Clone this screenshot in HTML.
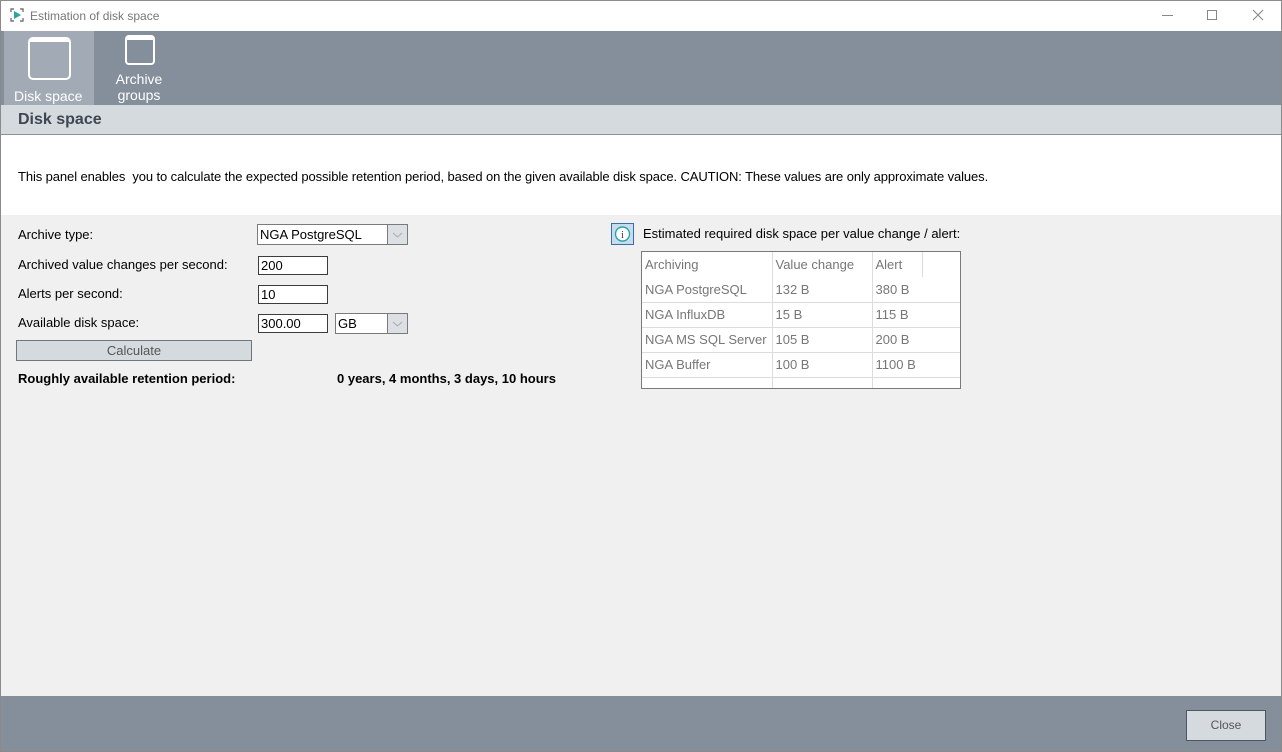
<!DOCTYPE html>
<html><head><meta charset="utf-8"><style>
*{box-sizing:border-box;margin:0;padding:0}
body{width:1282px;height:752px;overflow:hidden;font-family:"Liberation Sans",Arial,sans-serif;font-size:12px;color:#000;background:#f0f0f0;position:relative}
.abs{position:absolute}
.frame{left:0;top:0;width:1282px;height:752px;border:1px solid #8a8a8a;z-index:10}
.title{left:0;top:0;width:1282px;height:31px;background:#fff}
.tb{left:0;top:31px;width:1282px;height:74px;background:#848f9b}
.hdr{left:0;top:105px;width:1282px;height:30px;background:#d5dadf;border-bottom:1px solid #8a9097}
.white{left:0;top:135px;width:1282px;height:80px;background:#fff}
.foot{left:0;top:696px;width:1282px;height:56px;background:#848f9b}
.lbl{font-size:13px}
.inp{background:#fff;border:1px solid #3c3c3c;height:19px;font-size:13px;padding:1px 0 0 2px;line-height:16px}
.sel{border:1px solid #7a7a7a;height:21px;font-size:13px;padding:2px 0 0 2px;background:#fff}
.sel .ar{position:absolute;right:0;top:0;width:20px;height:19px;background:#dcdfe3;border-left:1px solid #7a7a7a}
table{border-collapse:collapse;font-size:13px;color:#777;table-layout:fixed}
td{height:25px;padding:0 3px;border-bottom:1px solid #dcdcdc;border-right:1px solid #dcdcdc;white-space:nowrap;overflow:hidden}
</style></head><body>
<div class="abs title">
<svg class="abs" style="left:10px;top:8px" width="14" height="14" viewBox="0 0 14 14"><path d="M1 4V1h3M10 1h3v3M13 10v3h-3M4 13H1v-3" stroke="#777" stroke-width="1.4" fill="none"/><path d="M4 3l7 4-7 4z" fill="#2aa5a0"/></svg>
<div class="abs" style="left:30px;top:9px;color:#777;font-size:12px">Estimation of disk space</div>
<div class="abs" style="left:1162px;top:15px;width:11px;height:1px;background:#888"></div>
<div class="abs" style="left:1207px;top:10px;width:10px;height:10px;border:1px solid #888"></div>
<svg class="abs" style="left:1252px;top:9px" width="12" height="12"><path d="M1 1l10 10M11 1L1 11" stroke="#888" stroke-width="1.1"/></svg>
</div>
<div class="abs tb">
<div class="abs" style="left:4px;top:0;width:90px;height:74px;background:#a2abb5"></div>
<div class="abs" style="left:28px;top:6px;width:43px;height:43px;border:2px solid #fff;border-radius:5px;border-top-width:5px"></div>
<div class="abs" style="left:14px;top:57px;color:#fff;font-size:14px">Disk space</div>
<div class="abs" style="left:125px;top:4px;width:30px;height:30px;border:2px solid #fff;border-radius:4px;border-top-width:5px"></div>
<div class="abs" style="left:100px;top:40px;width:78px;text-align:center;color:#fff;font-size:14px;line-height:16px">Archive<br>groups</div>
</div>
<div class="abs hdr"><div class="abs" style="left:18px;top:6px;font-size:16px;font-weight:bold;color:#3e4650">Disk space</div></div>
<div class="abs white"><div class="abs" style="left:18px;top:34px;font-size:13px;letter-spacing:-0.1px">This panel enables&nbsp; you to calculate the expected possible retention period, based on the given available disk space. CAUTION: These values are only approximate values.</div></div>
<div class="abs lbl" style="left:18px;top:227px">Archive type:</div>
<div class="abs lbl" style="left:18px;top:257px">Archived value changes per second:</div>
<div class="abs lbl" style="left:18px;top:286px">Alerts per second:</div>
<div class="abs lbl" style="left:18px;top:315px">Available disk space:</div>
<div class="abs sel" style="left:257px;top:224px;width:151px">NGA PostgreSQL<div class="ar"><svg width="19" height="19"><path d="M5 8l4.5 4 4.5-4" stroke="#aaa" fill="none"/></svg></div></div>
<div class="abs inp" style="left:258px;top:256px;width:70px">200</div>
<div class="abs inp" style="left:258px;top:285px;width:70px">10</div>
<div class="abs inp" style="left:258px;top:314px;width:70px">300.00</div>
<div class="abs sel" style="left:335px;top:313px;width:73px">GB<div class="ar"><svg width="19" height="19"><path d="M5 8l4.5 4 4.5-4" stroke="#aaa" fill="none"/></svg></div></div>
<div class="abs" style="left:16px;top:340px;width:236px;height:21px;background:#d5dadf;border:1px solid #6f767d;text-align:center;font-size:13px;color:#555;line-height:19px">Calculate</div>
<div class="abs" style="left:18px;top:371px;font-size:13px;font-weight:bold">Roughly available retention period:</div>
<div class="abs" style="left:337px;top:371px;font-size:13px;font-weight:bold">0 years, 4 months, 3 days, 10 hours</div>
<div class="abs" style="left:611px;top:223px;width:23px;height:22px;background:#c7dcf0;border:1px solid #3a6ea5"><svg width="21" height="20"><circle cx="10.5" cy="10" r="7" fill="#fff" stroke="#2aa5a0" stroke-width="1.4"/><text x="10.5" y="14" font-size="10" text-anchor="middle" fill="#333" font-family="Liberation Serif">i</text></svg></div>
<div class="abs lbl" style="left:643px;top:226px">Estimated required disk space per value change / alert:</div>
<div class="abs" style="left:641px;top:251px;width:320px;height:138px;background:#fff;border:1px solid #7a7a7a;overflow:hidden">
<table style="width:318px"><colgroup><col style="width:130px"><col style="width:100px"><col style="width:50px"><col style="width:38px"></colgroup>
<tr><td style="height:24px;border-bottom:none">Archiving</td><td style="border-bottom:none">Value change</td><td style="border-bottom:none">Alert</td><td style="border:none"></td></tr>
<tr><td>NGA PostgreSQL</td><td>132 B</td><td colspan="2" style="border-right:none">380 B</td></tr>
<tr><td>NGA InfluxDB</td><td>15 B</td><td colspan="2" style="border-right:none">115 B</td></tr>
<tr><td>NGA MS SQL Server</td><td>105 B</td><td colspan="2" style="border-right:none">200 B</td></tr>
<tr><td>NGA Buffer</td><td>100 B</td><td colspan="2" style="border-right:none">1100 B</td></tr>
<tr><td style="height:13px;border-bottom:none"></td><td style="border-bottom:none"></td><td colspan="2" style="border:none"></td></tr></table>
</div>
<div class="abs foot"><div class="abs" style="left:1186px;top:14px;width:80px;height:31px;background:#d5dadf;border:1px solid #4e5660;text-align:center;line-height:29px;color:#555;font-size:12px">Close</div></div>
<div class="abs frame"></div>
</body></html>
